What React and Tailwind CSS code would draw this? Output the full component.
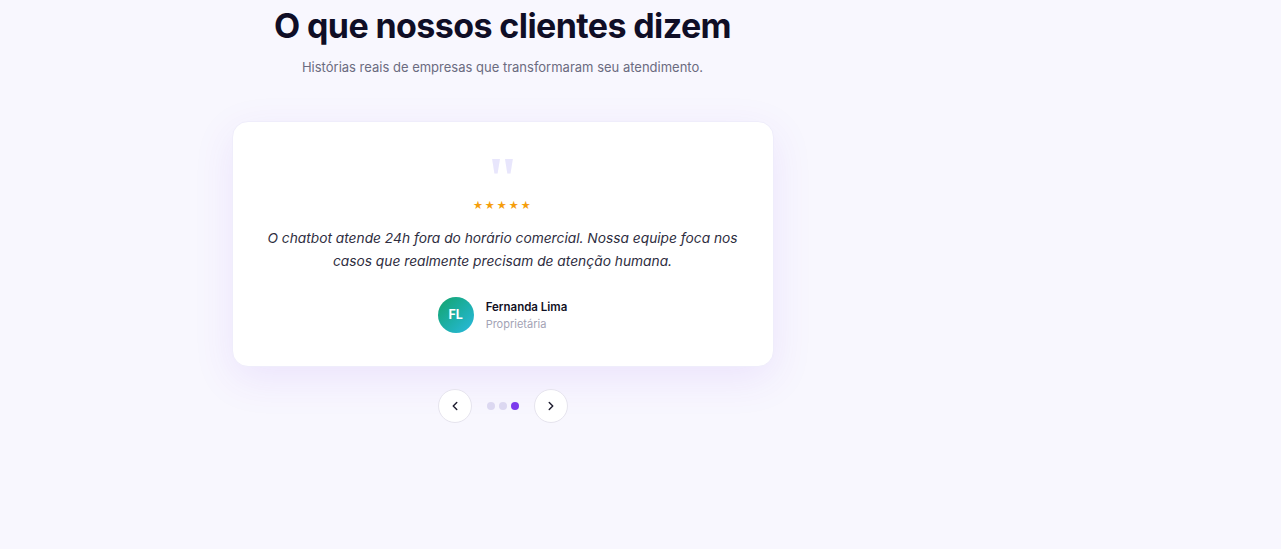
import { ChevronLeft, ChevronRight } from "lucide-react";

const testimonial = {
  quote:
    "O chatbot atende 24h fora do horário comercial. Nossa equipe foca nos casos que realmente precisam de atenção humana.",
  name: "Fernanda Lima",
  role: "Proprietária",
  initials: "FL",
  rating: 5,
};

export default function App() {
  const active = 2;

  return (
    <div className="min-h-[549px] w-full bg-[#f8f7fe] font-['Inter',sans-serif]">
      <div className="flex w-[1005px] flex-col items-center pt-[4px]">
        {/* Heading */}
        <h2 className="text-[34px] font-bold leading-[44px] tracking-[-0.6px] text-[#0f0e26]">
          O que nossos clientes dizem
        </h2>
        <p className="mt-[9px] text-[13px] leading-5 text-[#6b6b80]">
          Histórias reais de empresas que transformaram seu atendimento.
        </p>

        {/* Card */}
        <div className="mt-[44px] w-[542px] rounded-[16px] border border-[#efedfb] bg-white px-8 pb-[33px] pt-[34px] text-center shadow-[0_12px_40px_rgba(124,58,237,0.10)]">
          <div className="h-[44px] font-['Liberation_Serif',serif] text-[62px] font-bold leading-[44px] text-[#e8e6fc]">
            "
          </div>
          <div className="text-[10px] leading-[10px] tracking-[1.5px] text-[#f59e0b]">
            {"★".repeat(testimonial.rating)}
          </div>
          <p className="mt-[17px] text-[13.75px] italic leading-[23px] text-[#2e2d40]">
            {testimonial.quote}
          </p>
          <div className="mt-[24px] flex items-center justify-center gap-3">
            <div className="flex h-9 w-9 items-center justify-center rounded-full bg-gradient-to-br from-[#16a36a] to-[#2bb9e0] text-[12.5px] font-bold text-white">
              {testimonial.initials}
            </div>
            <div className="text-left">
              <div className="text-[11.5px] font-semibold leading-4 text-[#111024]">
                {testimonial.name}
              </div>
              <div className="mt-[1px] text-[11px] leading-4 text-[#a3a3b5]">
                {testimonial.role}
              </div>
            </div>
          </div>
        </div>

        {/* Controls */}
        <div className="mt-[22px] flex items-center gap-[15px]">
          <button className="flex h-[34px] w-[34px] items-center justify-center rounded-full border border-[#e6e4ee] bg-white text-[#1f1e30]">
            <ChevronLeft size={14} strokeWidth={2.5} />
          </button>
          <div className="flex items-center gap-1">
            {[0, 1, 2].map((i) => (
              <span
                key={i}
                className={`h-2 w-2 rounded-full ${
                  i === active ? "bg-[#7c3aed]" : "bg-[#dcd8f1]"
                }`}
              />
            ))}
          </div>
          <button className="flex h-[34px] w-[34px] items-center justify-center rounded-full border border-[#e6e4ee] bg-white text-[#1f1e30]">
            <ChevronRight size={14} strokeWidth={2.5} />
          </button>
        </div>
      </div>
    </div>
  );
}
